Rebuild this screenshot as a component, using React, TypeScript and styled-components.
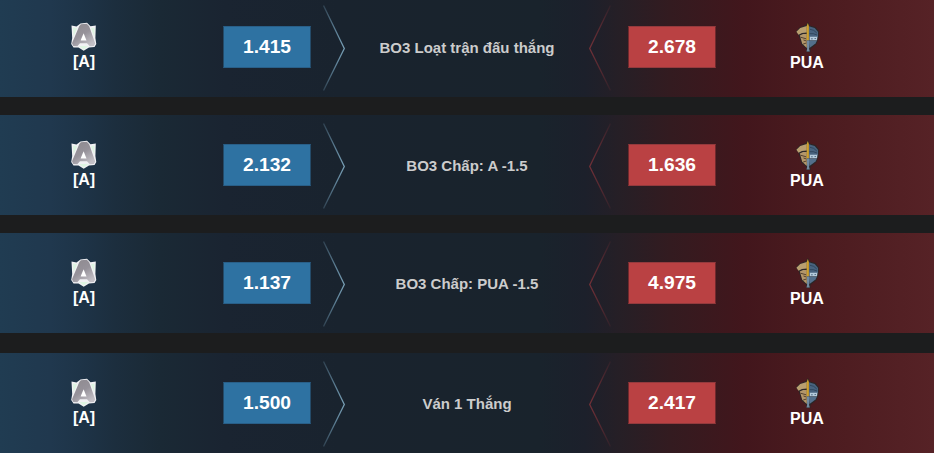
import styled, { createGlobalStyle } from 'styled-components';

const GlobalStyle = createGlobalStyle`
  body {
    margin: 0;
    background: #1c1d1e;
    overflow: hidden;
  }
`;

const MarketList = styled.div`
  display: flex;
  flex-direction: column;
  width: 934px;
  height: 456px;
  margin-top: -3px;
  overflow: hidden;
  font-family: 'Liberation Sans', Arial, sans-serif;
  font-weight: bold;
`;

const MarketRow = styled.div<{ $gap: number }>`
  display: grid;
  grid-template-columns: 168px 55px 88px 12px 22px 244px 22px 17px 88px 182px 36px;
  flex: none;
  height: 100px;
  margin-bottom: ${({ $gap }) => $gap}px;
  background: linear-gradient(
    90deg,
    #203c52 0,
    #20384e 50px,
    #1e3448 80px,
    #1c2e3e 115px,
    #1a2935 160px,
    #1a2431 225px,
    #19232e 340px,
    #19232c 540px,
    #1c202b 585px,
    #261f26 620px,
    #331b20 670px,
    #42161c 745px,
    #4b1b1f 815px,
    #562226 934px
  );
`;

const Team = styled.div<{ $column: number }>`
  grid-column: ${({ $column }) => $column};
  display: flex;
  flex-direction: column;
  align-items: center;
  padding-top: 24px;

  svg {
    display: block;
    width: 32px;
    height: 32px;
  }
`;

const TeamName = styled.div<{ $offset: number }>`
  margin-top: ${({ $offset }) => $offset}px;
  color: #fff;
  font-size: 16px;
  line-height: 20px;
`;

const Odds = styled.div<{ $side: 'home' | 'away' }>`
  grid-column: ${({ $side }) => ($side === 'home' ? 3 : 9)};
  box-sizing: border-box;
  display: flex;
  justify-content: center;
  width: 88px;
  height: 42px;
  margin-top: 29px;
  border: 1px solid;
  border-color: ${({ $side }) => ($side === 'home' ? '#295f88 #244b69' : '#943a3d #70292d')};
  background: ${({ $side }) => ($side === 'home' ? '#2e72a2' : '#ba4143')};
  color: #fff;
  font-size: 19.2px;
  line-height: 39px;
`;

const Chevron = styled.svg<{ $column: number }>`
  grid-column: ${({ $column }) => $column};
  display: block;
  width: 22px;
  height: 86px;
  margin-top: 8px;
`;

const MarketName = styled.div`
  grid-column: 6;
  display: flex;
  justify-content: center;
  align-items: center;
  color: #ccc;
  font-size: 15px;
  line-height: 20px;
  padding-top: 2px;
`;

const HomeLogo = () => (
  <svg viewBox="0 0 32 32">
    <path d="M3.5 4.5 8.5 5.5 12.5 2.5 19 1.8 22.5 5.2 27.8 4.5 27.4 17 28.3 23 26.5 26 21 26.5 15.7 29.8 10.5 26.5 5.5 26.5 3.2 23 4.2 17Z" fill="#f1f1f4" />
    <path d="M5 6.5 9 7.2 5.5 15.5ZM26.5 6.5 23 7.2 26.3 15.5ZM11 25 20.5 25 15.7 28.5Z" fill="#def5e2" />
    <path
      d="M12.8 3.3 18.8 2.8 21.2 5.3 27.2 22.5 25.8 25 21.8 25.2 19 22.3H12L9.3 25.2 5.3 25 4 22.3 11.2 5.3Z"
      fill="url(#home-metal)"
    />
    <path d="M15.6 12.3 18.5 19.4H12.6Z" fill="#fff" />
  </svg>
);

const AwayLogo = () => (
  <svg viewBox="0 0 32 32">
    <path d="M5 10.5 8.5 6.5 14.5 4.3 17 1 18.5 4.5 24.5 6 28 10.5 27.5 17.5 25.5 23 19.5 28V31H15.5V28L10.5 23.5 7.8 14.5Z" fill="#2b2728" />
    <path d="M5.4 10.7 9.2 7 15.8 5.1V11.5L11 12 7.5 13.8Z" fill="#b99f70" />
    <path d="M8.8 14.5 12 13 15.8 13V27L11.2 22.7Z" fill="#b3966a" />
    <path d="M9.5 16.2 15.2 17.8M12.5 19 15.5 20M12.2 23 15.4 22" fill="none" stroke="#4a3929" strokeWidth=".9" />
    <path d="M17.8 5.2 23.6 6.9 27 10.8V16H17.8Z" fill="#48637f" />
    <path d="M19 8.3Q23 8.5 25.8 12M18.5 12.7Q22.5 12 26 14" fill="none" stroke="#2b4056" strokeWidth=".8" />
    <path d="M17.8 19.5H26L24.5 22.5 18.5 27Z" fill="#536f8b" />
    <path d="M18.5 15.7H26.5L26 19.3H18.5Z" fill="#b5cbdc" />
    <path d="M20 17.8H21.8M23.5 17.5H25" stroke="#57728b" strokeWidth="1" />
    <path d="M15.7 5 16.8 2 17.9 5V19.5H15.7Z" fill="#d0a12d" />
    <path d="M15.9 19.5H18.1V28L18.8 30.5H15.5L16.1 28Z" fill="#7189a0" />
  </svg>
);

const Gradients = () => (
  <svg width="0" height="0" style={{ display: 'block' }}>
    <defs>
      <linearGradient id="home-metal" x1="0" y1="0" x2=".7" y2="1">
        <stop offset="0" stopColor="#8d898e" />
        <stop offset=".55" stopColor="#96929a" />
        <stop offset="1" stopColor="#c3c0c6" />
      </linearGradient>
      <linearGradient id="home-line" gradientUnits="userSpaceOnUse" x1="0" y1="0" x2="22" y2="0">
        <stop offset="0" stopColor="#7099b2" stopOpacity=".25" />
        <stop offset=".6" stopColor="#7099b2" stopOpacity=".8" />
        <stop offset="1" stopColor="#7ca4ba" />
      </linearGradient>
      <linearGradient id="away-line" gradientUnits="userSpaceOnUse" x1="0" y1="0" x2="22" y2="0">
        <stop offset="0" stopColor="#743138" />
        <stop offset=".5" stopColor="#6c2d34" stopOpacity=".7" />
        <stop offset="1" stopColor="#6c2d34" stopOpacity=".15" />
      </linearGradient>
    </defs>
  </svg>
);

const Market = ({ name, home, away, gap }: MarketProps) => {
  return <MarketRow $gap={gap}>
    <Team $column={1}>
      <HomeLogo />
      <TeamName $offset={-1}>[A]</TeamName>
    </Team>
    <Odds $side='home'>{home}</Odds>
    <Chevron $column={5} viewBox='0 0 22 86'>
      <path d='M.5 .5 21.3 43.5.5 85.5' fill='none' stroke='url(#home-line)' strokeWidth='1.3' />
    </Chevron>
    <MarketName>{name}</MarketName>
    <Chevron $column={7} viewBox='0 0 22 86'>
      <path d='M21.5 .5.7 43.5 21.5 85.5' fill='none' stroke='url(#away-line)' strokeWidth='1.3' />
    </Chevron>
    <Odds $side='away'>{away}</Odds>
    <Team $column={10}>
      <AwayLogo />
      <TeamName $offset={0}>PUA</TeamName>
    </Team>
  </MarketRow>;
}

type MarketProps = {
  name: string;
  home: string;
  away: string;
  gap: number;
}

const markets: MarketProps[] = [
  { name: 'BO3 Loạt trận đấu thắng', home: '1.415', away: '2.678', gap: 18 },
  { name: 'BO3 Chấp: A -1.5', home: '2.132', away: '1.636', gap: 18 },
  { name: 'BO3 Chấp: PUA -1.5', home: '1.137', away: '4.975', gap: 20 },
  { name: 'Ván 1 Thắng', home: '1.500', away: '2.417', gap: 0 },
];

const App = () => {
  return <>
    <GlobalStyle />
    <Gradients />
    <MarketList>
      {markets.map((market) => <Market key={market.name} {...market} />)}
    </MarketList>
  </>;
}

export default App;
